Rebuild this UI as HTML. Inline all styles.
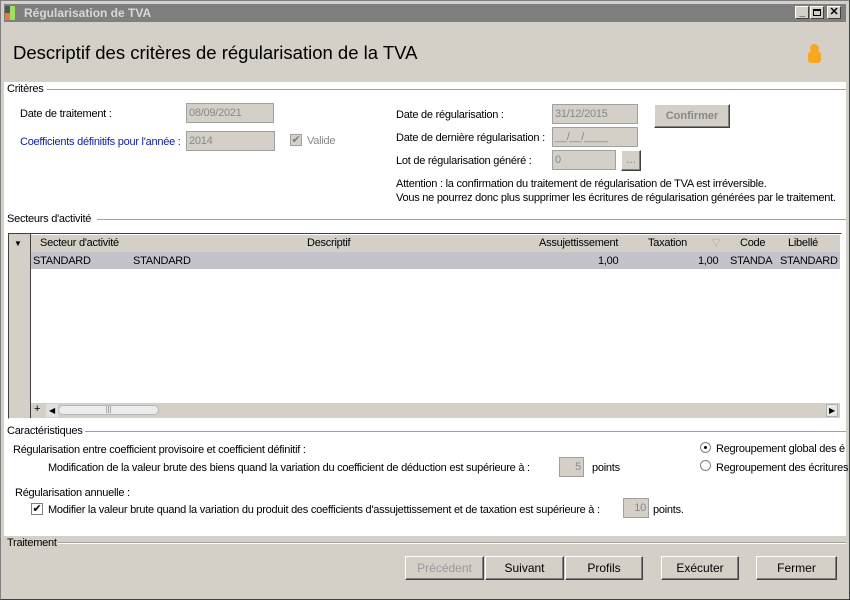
<!DOCTYPE html>
<html><head><meta charset="utf-8"><style>
*{margin:0;padding:0;box-sizing:border-box}
body{width:850px;height:600px;background:#d4d0c8;font-family:"Liberation Sans",sans-serif;font-size:11px;letter-spacing:-0.25px;color:#000;position:relative;overflow:hidden}
.a{position:absolute;white-space:nowrap}
.fr{position:absolute;left:0;top:0;width:850px;height:600px;border:1px solid #808080;border-right-color:#404040;border-bottom-color:#404040}
.in{background:#d4d0c8;border:1px solid #a0a0a0;color:#888;padding:0 2px;height:20px;line-height:18px}
.btn{position:absolute;background:#d4d0c8;border:1px solid;border-color:#fff #404040 #404040 #fff;box-shadow:inset -1px -1px 0 #808080;text-align:center;line-height:22px;height:24px;font-size:12px;letter-spacing:0}
.line{position:absolute;height:2px;border-top:1px solid #a0a0a0;border-bottom:1px solid #fff}
</style></head><body>
<div class="fr"></div>
<div class="a" style="left:4px;top:4px;width:842px;height:18px;background:#7f7f7f"></div>
<div class="a" style="left:5px;top:6px;width:5px;height:8px;background:#555"></div>
<div class="a" style="left:5px;top:13px;width:5px;height:7px;background:#f07830"></div>
<div class="a" style="left:10px;top:6px;width:5px;height:14px;background:#a0e060"></div>
<div class="a" style="left:24px;top:6px;color:#d8d8d8;font-weight:bold;font-size:12px;letter-spacing:0">Régularisation de TVA</div>
<div class="a" style="left:795px;top:6px;width:14px;height:13px;background:#d4d0c8;border:1px solid;border-color:#fff #404040 #404040 #fff;font-size:10px;line-height:11px;text-align:center;font-weight:bold">_</div>
<div class="a" style="left:810px;top:6px;width:14px;height:13px;background:#d4d0c8;border:1px solid;border-color:#fff #404040 #404040 #fff"><div style="margin:2px 2px;width:8px;height:7px;border:1px solid #000;border-top-width:2px"></div></div>
<div class="a" style="left:827px;top:6px;width:14px;height:13px;background:#d4d0c8;border:1px solid;border-color:#fff #404040 #404040 #fff;font-size:11px;line-height:11px;text-align:center;font-weight:bold">✕</div>
<div class="a" style="left:13px;top:42px;font-size:18.5px;letter-spacing:0">Descriptif des critères de régularisation de la TVA</div>
<div class="a" style="left:810px;top:44px;width:9px;height:9px;border-radius:50%;background:#f8a820"></div>
<div class="a" style="left:808px;top:51px;width:13px;height:12px;border-radius:4px 4px 3px 3px;background:#f8a820"></div>
<div class="a" style="left:4px;top:82px;width:842px;height:454px;background:#fff"></div>
<div class="a" style="left:7px;top:83px">Critères</div>
<div class="line" style="left:47px;top:89px;width:799px"></div>
<div class="a" style="left:20px;top:108px">Date de traitement :</div>
<div class="a in" style="left:186px;top:103px;width:88px">08/09/2021</div>
<div class="a" style="left:20px;top:136px;color:#1020a0">Coefficients définitifs pour l'année :</div>
<div class="a in" style="left:186px;top:131px;width:89px">2014</div>
<div class="a" style="left:290px;top:134px;width:12px;height:12px;border:1px solid #a0a0a0;background:#d4d0c8;color:#808080;font-size:11px;line-height:10px;text-align:center">✔</div>
<div class="a" style="left:307px;top:135px;color:#888">Valide</div>
<div class="a" style="left:396px;top:109px">Date de régularisation :</div>
<div class="a in" style="left:552px;top:104px;width:86px">31/12/2015</div>
<div class="btn" style="left:654px;top:104px;width:76px;color:#888;font-weight:bold;font-size:11px">Confirmer</div>
<div class="a" style="left:396px;top:132px">Date de dernière régularisation :</div>
<div class="a in" style="left:552px;top:127px;width:86px">__/__/____</div>
<div class="a" style="left:396px;top:155px">Lot de régularisation généré :</div>
<div class="a in" style="left:552px;top:150px;width:64px">0</div>
<div class="btn" style="left:621px;top:150px;width:20px;height:21px;line-height:16px;color:#888">...</div>
<div class="a" style="left:396px;top:178px">Attention : la confirmation du traitement de régularisation de TVA est irréversible.</div>
<div class="a" style="left:396px;top:192px">Vous ne pourrez donc plus supprimer les écritures de régularisation générées par le traitement.</div>
<div class="a" style="left:7px;top:213px">Secteurs d'activité</div>
<div class="line" style="left:97px;top:219px;width:749px"></div>
<div class="a" style="left:8px;top:233px;width:834px;height:186px;border:1px solid;border-color:#404040 #fff #fff #404040;background:#fff"></div>
<div class="a" style="left:9px;top:234px;width:22px;height:184px;background:#d4d0c8;border-right:1px solid #404040"></div>
<div class="a" style="left:14px;top:239px;font-size:8px">▼</div>
<div class="a" style="left:31px;top:235px;width:809px;height:17px;background:#d4d0c8"></div>
<div class="a" style="left:40px;top:237px">Secteur d'activité</div>
<div class="a" style="left:307px;top:237px">Descriptif</div>
<div class="a" style="left:539px;top:237px">Assujettissement</div>
<div class="a" style="left:648px;top:237px">Taxation</div>
<div class="a" style="left:712px;top:236px;color:#b0b0b0">▽</div>
<div class="a" style="left:740px;top:237px">Code</div>
<div class="a" style="left:788px;top:237px">Libellé</div>
<div class="a" style="left:31px;top:252px;width:809px;height:17px;background:#c4c3cc"></div>
<div class="a" style="left:33px;top:255px">STANDARD</div>
<div class="a" style="left:133px;top:255px">STANDARD</div>
<div class="a" style="left:598px;top:255px">1,00</div>
<div class="a" style="left:698px;top:255px">1,00</div>
<div class="a" style="left:730px;top:255px">STANDA</div>
<div class="a" style="left:780px;top:255px;width:58px;overflow:hidden">STANDARD</div>
<div class="a" style="left:31px;top:403px;width:809px;height:15px;background:#d4d0c8"></div>
<div class="a" style="left:34px;top:403px;font-size:11px">+</div>
<div class="a" style="left:46px;top:404px;width:12px;height:13px;background:#e0e0e0;font-size:8px;line-height:13px;text-align:center">◀</div>
<div class="a" style="left:58px;top:405px;width:101px;height:10px;border-radius:5px;background:#ececec;border:1px solid #b8b8b8;font-size:8px;line-height:8px;text-align:center;color:#888">|||</div>
<div class="a" style="left:826px;top:404px;width:12px;height:13px;background:#e8e8e8;border:1px solid #b0b0b0;font-size:8px;line-height:11px;text-align:center">▶</div>
<div class="a" style="left:7px;top:425px">Caractéristiques</div>
<div class="line" style="left:85px;top:431px;width:761px"></div>
<div class="a" style="left:13px;top:444px">Régularisation entre coefficient provisoire et coefficient définitif :</div>
<div class="a" style="left:48px;top:462px">Modification de la valeur brute des biens quand la variation du coefficient de déduction est supérieure à :</div>
<div class="a in" style="left:559px;top:457px;width:25px;text-align:right">5</div>
<div class="a" style="left:592px;top:462px">points</div>
<div class="a" style="left:700px;top:442px;width:11px;height:11px;border-radius:50%;border:1px solid #808080;background:#fff"><div style="margin:3px;width:3px;height:3px;background:#000;border-radius:50%"></div></div>
<div class="a" style="left:716px;top:443px">Regroupement global des é</div>
<div class="a" style="left:700px;top:460px;width:11px;height:11px;border-radius:50%;border:1px solid #808080;background:#fff"></div>
<div class="a" style="left:716px;top:462px">Regroupement des écritures</div>
<div class="a" style="left:15px;top:487px">Régularisation annuelle :</div>
<div class="a" style="left:31px;top:503px;width:12px;height:12px;border:1px solid #808080;background:#fff;font-size:11px;line-height:10px;text-align:center">✔</div>
<div class="a" style="left:48px;top:504px">Modifier la valeur brute quand la variation du produit des coefficients d'assujettissement et de taxation est supérieure à :</div>
<div class="a in" style="left:623px;top:498px;width:26px;text-align:right">10</div>
<div class="a" style="left:653px;top:504px">points.</div>
<div class="a" style="left:7px;top:537px">Traitement</div>
<div class="line" style="left:58px;top:542px;width:788px"></div>
<div class="btn" style="left:405px;top:556px;width:79px;color:#999">Précédent</div>
<div class="btn" style="left:485px;top:556px;width:79px">Suivant</div>
<div class="btn" style="left:565px;top:556px;width:78px">Profils</div>
<div class="btn" style="left:661px;top:556px;width:78px">Exécuter</div>
<div class="btn" style="left:756px;top:556px;width:81px">Fermer</div>
</body></html>
